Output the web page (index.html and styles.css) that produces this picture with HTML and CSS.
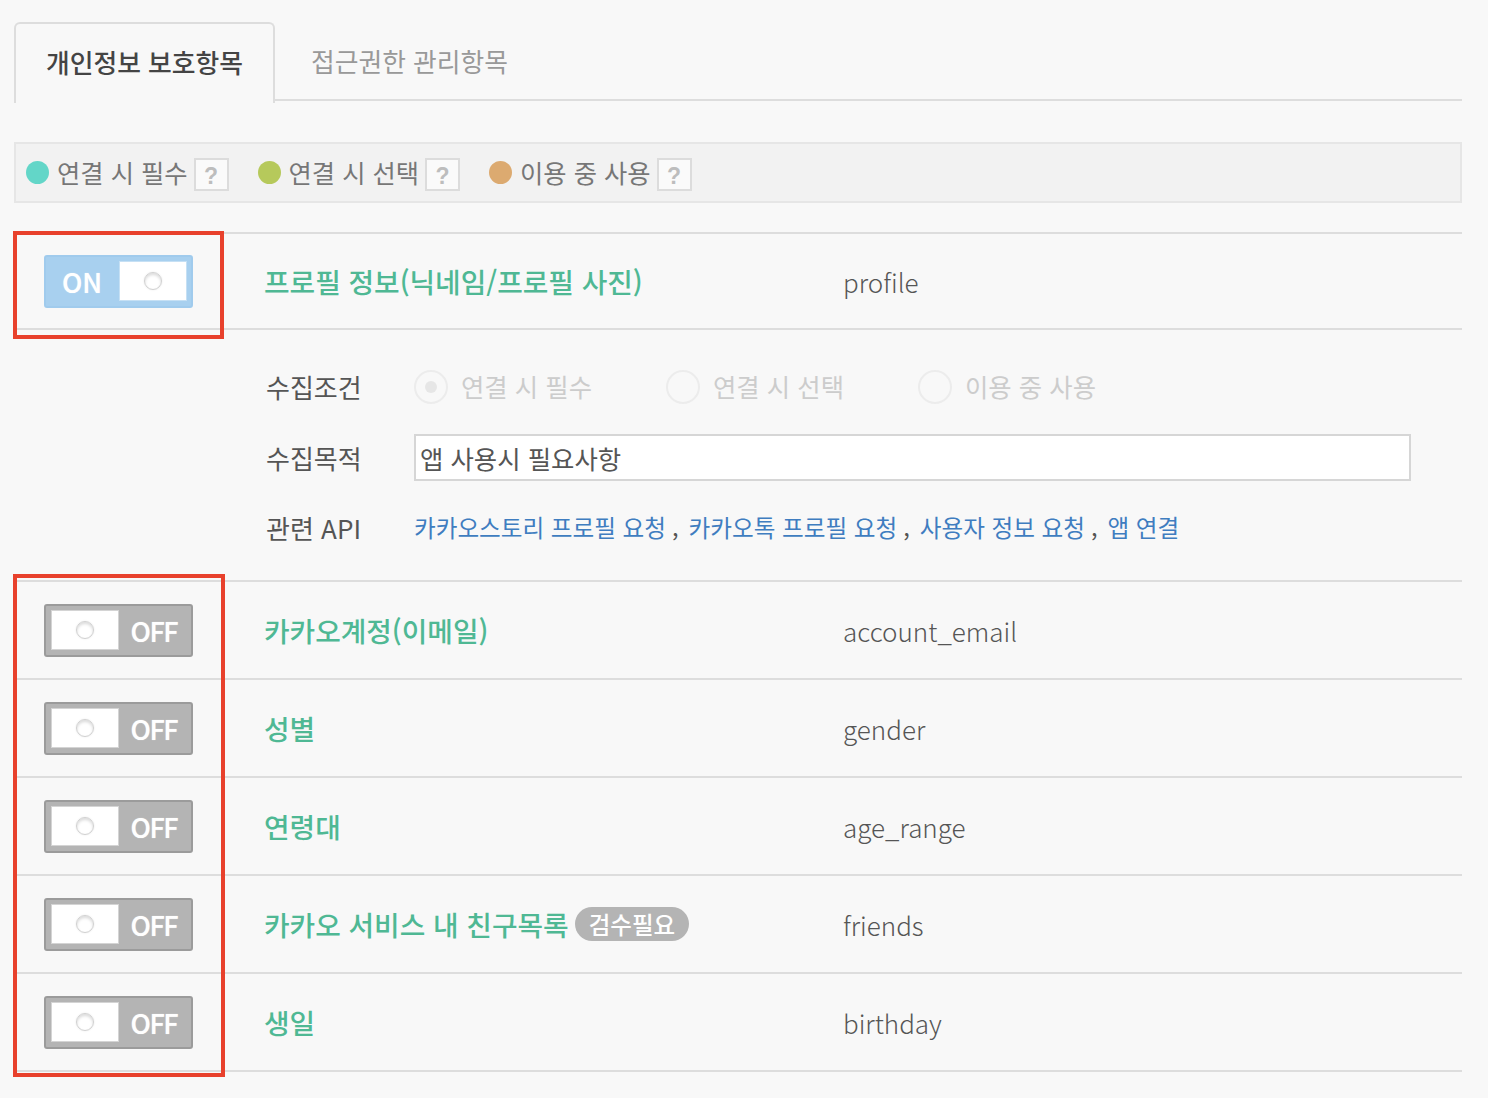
FILE: index.html
```html
<!DOCTYPE html>
<html lang="ko">
<head>
<meta charset="utf-8">
<title>개인정보 보호항목</title>
<link rel="stylesheet" href="styles.css">
</head>
<body>
<div class="page">
  <div class="tabs">
    <div class="tab tab-active">개인정보 보호항목</div>
    <div class="tab">접근권한 관리항목</div>
  </div>

  <div class="legend">
    <span class="legend-item"><span class="dot dot-req"></span>연결 시 필수<span class="help">?</span></span>
    <span class="legend-item"><span class="dot dot-opt"></span>연결 시 선택<span class="help">?</span></span>
    <span class="legend-item"><span class="dot dot-use"></span>이용 중 사용<span class="help">?</span></span>
  </div>

  <div class="table">
    <div class="row row-first">
      <div class="cell-toggle">
        <div class="toggle toggle-on"><span class="toggle-text">ON</span><span class="knob"><span class="ring"></span></span></div>
      </div>
      <div class="cell-name">프로필 정보(닉네임/프로필 사진)</div>
      <div class="cell-key">profile</div>
    </div>

    <div class="details">
      <div class="d-label">수집조건</div>
      <div class="d-radios">
        <span class="radio"><span class="radio-circle radio-checked"></span>연결 시 필수</span>
        <span class="radio"><span class="radio-circle"></span>연결 시 선택</span>
        <span class="radio"><span class="radio-circle"></span>이용 중 사용</span>
      </div>
      <div class="d-label">수집목적</div>
      <div class="d-input"><div class="input">앱 사용시 필요사항</div></div>
      <div class="d-label">관련 API</div>
      <div class="d-api"><a class="api-link">카카오스토리 프로필 요청</a><span class="sep">,</span><a class="api-link">카카오톡 프로필 요청</a><span class="sep">,</span><a class="api-link">사용자 정보 요청</a><span class="sep">,</span><a class="api-link">앱 연결</a></div>
    </div>

    <div class="row">
      <div class="cell-toggle">
        <div class="toggle toggle-off"><span class="knob"><span class="ring"></span></span><span class="toggle-text">OFF</span></div>
      </div>
      <div class="cell-name">카카오계정(이메일)</div>
      <div class="cell-key">account_email</div>
    </div>
    <div class="row">
      <div class="cell-toggle">
        <div class="toggle toggle-off"><span class="knob"><span class="ring"></span></span><span class="toggle-text">OFF</span></div>
      </div>
      <div class="cell-name">성별</div>
      <div class="cell-key">gender</div>
    </div>
    <div class="row">
      <div class="cell-toggle">
        <div class="toggle toggle-off"><span class="knob"><span class="ring"></span></span><span class="toggle-text">OFF</span></div>
      </div>
      <div class="cell-name">연령대</div>
      <div class="cell-key">age_range</div>
    </div>
    <div class="row">
      <div class="cell-toggle">
        <div class="toggle toggle-off"><span class="knob"><span class="ring"></span></span><span class="toggle-text">OFF</span></div>
      </div>
      <div class="cell-name">카카오 서비스 내 친구목록<span class="badge">검수필요</span></div>
      <div class="cell-key">friends</div>
    </div>
    <div class="row">
      <div class="cell-toggle">
        <div class="toggle toggle-off"><span class="knob"><span class="ring"></span></span><span class="toggle-text">OFF</span></div>
      </div>
      <div class="cell-name">생일</div>
      <div class="cell-key">birthday</div>
    </div>
  </div>

  <div class="mark mark-1"></div>
  <div class="mark mark-2"></div>
</div>
</body>
</html>
```

FILE: styles.css
```css
* { box-sizing: border-box; }

html, body {
  margin: 0;
  padding: 0;
  background: #f8f8f8;
}

body {
  font-family: "Noto Sans CJK KR", "Noto Sans", sans-serif;
  color: #555;
}

.page {
  position: relative;
  width: 1448px;
  margin-left: 14px;
  padding-top: 22px;
  padding-bottom: 24px;
}

/* Tabs */
.tabs {
  display: flex;
  height: 79px;
  border-bottom: 2px solid #dddddd;
}

.tab {
  width: 269px;
  height: 79px;
  display: flex;
  align-items: center;
  justify-content: center;
  font-size: 25.8px;
  color: #999;
  padding-bottom: 2px;
}

.tab-active {
  width: 261px;
  height: 81px;
  border: 2px solid #dddddd;
  border-bottom: none;
  border-radius: 6px 6px 0 0;
  background: #f8f8f8;
  color: #444;
  font-weight: 500;
  margin-bottom: -2px;
  padding-bottom: 4px;
}

/* Legend */
.legend {
  margin-top: 41px;
  height: 61px;
  border: 2px solid #e6e6e6;
  background: #f2f2f2;
  display: flex;
  align-items: center;
  padding-left: 10px;
  gap: 29px;
}

.legend-item {
  display: flex;
  align-items: center;
  font-size: 25.3px;
  color: #777;
  line-height: 1;
}

.dot {
  width: 23px;
  height: 23px;
  border-radius: 50%;
  margin-right: 8px;
}

.dot-req { background: #63d6c8; }
.dot-opt { background: #b6c95b; }
.dot-use { background: #dcaa70; }

.help {
  width: 35px;
  height: 33px;
  margin-left: 6px;
  margin-top: 4px;
  border: 2px solid #dcdcdc;
  background: #fafafa;
  color: #bdbdbd;
  font-family: "Liberation Sans", Arial, sans-serif;
  font-weight: 700;
  font-size: 23px;
  display: flex;
  align-items: center;
  justify-content: center;
  padding-top: 3px;
}

/* Table */
.table {
  margin-top: 29px;
  border-top: 2px solid #dddddd;
}

.row {
  display: flex;
  align-items: center;
  height: 98px;
  border-bottom: 2px solid #dddddd;
}

.row-first {
  height: 96px;
}

.cell-toggle {
  width: 250px;
  padding-left: 30px;
}

.cell-name {
  width: 579px;
  display: flex;
  align-items: center;
  font-size: 27.8px;
  font-weight: 500;
  color: #4fb894;
}

.cell-key {
  font-size: 26px;
  font-weight: 300;
  color: #555;
}

.badge {
  margin-left: 6px;
  height: 34px;
  padding: 0 14px;
  border-radius: 17px;
  background: #b4b4b4;
  color: #fff;
  font-size: 23.5px;
  font-weight: 500;
  display: inline-flex;
  align-items: center;
}

/* Toggle */
.toggle {
  width: 149px;
  height: 53px;
  border: 2px solid #999;
  border-radius: 3px;
  display: flex;
  align-items: center;
  justify-content: space-between;
}

.toggle-on {
  background: #a8d0ef;
  border-color: #a0cbed;
  padding: 0 4px 0 16px;
}

.toggle-off {
  background: #b4b4b4;
  border-color: #9b9b9b;
  padding: 0 14px 0 5px;
}

.toggle-text {
  color: #fff;
  font-size: 27px;
  font-weight: 500;
  line-height: 1;
  text-shadow: 0 0 1px rgba(255, 255, 255, 0.7);
}

.toggle-off .toggle-text {
  letter-spacing: -1.5px;
}

.knob {
  width: 68px;
  height: 40px;
  background: #fff;
  border: 1px solid #d4d4d4;
  display: flex;
  align-items: center;
  justify-content: center;
}

.toggle-on .knob { border-color: #c6e0f4; }

.ring {
  width: 18px;
  height: 18px;
  border-radius: 50%;
  border: 1px solid #d0d0d0;
  box-shadow: inset 0 2px 3px rgba(0, 0, 0, 0.14), 0 0 2px rgba(0, 0, 0, 0.1);
}

/* Details */
.details {
  display: grid;
  grid-template-columns: 148px 1fr;
  grid-template-rows: 34px 47px 34px;
  row-gap: 30px;
  padding: 40px 0 35px 252px;
  border-bottom: 2px solid #dddddd;
  align-items: center;
}

.d-label {
  font-size: 26px;
  color: #555;
  line-height: 1;
}

.d-radios {
  display: flex;
  align-items: center;
}

.radio {
  width: 252px;
  display: flex;
  align-items: center;
  font-size: 25.4px;
  color: #cccccc;
  line-height: 1;
}

.radio-circle {
  width: 34px;
  height: 34px;
  border-radius: 50%;
  border: 2px solid #ececec;
  background: #f8f8f8;
  margin-right: 13px;
  display: flex;
  align-items: center;
  justify-content: center;
}

.radio-checked::after {
  content: "";
  width: 12px;
  height: 12px;
  border-radius: 50%;
  background: #e6e6e6;
}

.input {
  width: 997px;
  height: 47px;
  border: 2px solid #d6d6d6;
  background: #fff;
  font-size: 25.4px;
  color: #555;
  display: flex;
  align-items: center;
  padding-left: 4px;
}

.d-api {
  font-size: 23.6px;
  line-height: 1;
  color: #555;
}

.api-link {
  color: #3f7dc0;
  text-decoration: none;
}

.sep {
  margin: 0 10px 0 6px;
}

/* Annotation marks */
.mark {
  position: absolute;
  border: 4px solid #e8412c;
}

.mark-1 {
  left: -1px;
  top: 231px;
  width: 211px;
  height: 108px;
}

.mark-2 {
  left: -1px;
  top: 574px;
  width: 212px;
  height: 503px;
}
```
